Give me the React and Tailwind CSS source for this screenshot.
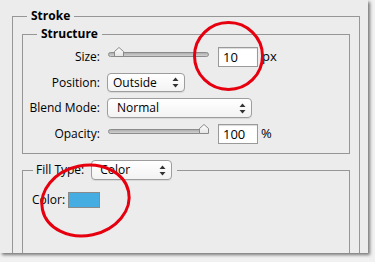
const LINE = 'border-[#969696]'

function Arrows() {
  return (
    <svg width="7" height="11" viewBox="0 0 7 11" className="shrink-0">
      <path d="M3.5 0.5 L6.5 4 L0.5 4 Z" fill="#333" />
      <path d="M3.5 10.5 L6.5 7 L0.5 7 Z" fill="#333" />
    </svg>
  )
}

function Select({ value, className, textPad }) {
  return (
    <div className={`flex items-center justify-between bg-gradient-to-b from-white to-[#f3f3f3] border border-[#9d9d9d] rounded-[4px] shadow-[0_1px_0_rgba(0,0,0,0.08)] pr-[5px] ${textPad} ${className}`}>
      <span className="leading-none">{value}</span>
      <Arrows />
    </div>
  )
}

function Slider({ pos }) {
  return (
    <svg width="101" height="20" viewBox="0 0 101 20" className="shrink-0">
      <defs>
        <linearGradient id="trk" x1="0" y1="0" x2="0" y2="1">
          <stop offset="0" stopColor="#a9a9a9" />
          <stop offset="1" stopColor="#d6d6d6" />
        </linearGradient>
        <linearGradient id="thm" x1="0" y1="0" x2="0" y2="1">
          <stop offset="0" stopColor="#ffffff" />
          <stop offset="1" stopColor="#e4e4e4" />
        </linearGradient>
      </defs>
      <rect x="0.5" y="5.5" width="100" height="4" rx="2" fill="url(#trk)" stroke="#8c8c8c" />
      <path d={`M${pos} 0.5 L${pos + 4.5} 4.5 L${pos + 4.5} 9.5 L${pos - 4.5} 9.5 L${pos - 4.5} 4.5 Z`} fill="url(#thm)" stroke="#8a8a8a" />
    </svg>
  )
}

function NumBox({ value }) {
  return (
    <div className="w-[40px] h-[20px] bg-white border border-[#9a9a9a] shadow-[inset_0_1px_1px_rgba(0,0,0,0.15)] flex items-center pl-[4px] text-[13px] leading-none">
      {value}
    </div>
  )
}

export default function App() {
  return (
    <div className="min-h-screen bg-[#f1f1f1] font-['Open_Sans',sans-serif] text-[12px] text-black">
      <div className="relative w-[368px] h-[253px] bg-[#ececec] shadow-[2px_2px_3px_rgba(0,0,0,0.5)] overflow-hidden">
        <div className="pt-2 pl-3 pr-2">
          <fieldset className={`border border-b-0 ${LINE} h-[245px]`}>
            <legend className="ml-[14px] px-1 font-bold leading-4">Stroke</legend>

            <fieldset className={`mt-[2px] mx-[9px] border ${LINE} pt-[5px] pb-[9px]`}>
              <legend className="ml-[14px] px-1 font-bold leading-4">Structure</legend>
              <div className="flex flex-col gap-[6px]">
                <div className="flex items-center h-[20px]">
                  <span className="w-[77px] text-right">Size:</span>
                  <div className="ml-[8px]"><Slider pos={11} /></div>
                  <div className="ml-[9px]"><NumBox value="10" /></div>
                  <span className="ml-[4px] text-[13px]">px</span>
                </div>
                <div className="flex items-center h-[19px]">
                  <span className="w-[77px] text-right">Position:</span>
                  <Select value="Outside" className="ml-[7px] w-[78px] h-[19px]" textPad="pl-[5px]" />
                </div>
                <div className="flex items-center h-[20px]">
                  <span className="w-[77px] text-right">Blend Mode:</span>
                  <Select value="Normal" className="ml-[7px] w-[145px] h-[20px]" textPad="pl-[9px]" />
                </div>
                <div className="flex items-center h-[20px]">
                  <span className="w-[77px] text-right">Opacity:</span>
                  <div className="ml-[8px]"><Slider pos={96} /></div>
                  <div className="ml-[9px]"><NumBox value="100" /></div>
                  <span className="ml-[3px] text-[13px]">%</span>
                </div>
              </div>
            </fieldset>

            <fieldset className={`mt-[6px] mx-[9px] border border-b-0 ${LINE} h-[94px] pt-[12px]`}>
              <legend className="ml-[10px] pl-[3px] pr-[5px]">
                <div className="flex items-center gap-[7px]">
                  <span>Fill Type:</span>
                  <Select value="Color" className="w-[81px] h-[20px]" textPad="pl-[8px]" />
                </div>
              </legend>
              <div className="flex items-center h-[16px] pl-[9px]">
                <span>Color:</span>
                <div className="ml-[3px] w-[32px] h-[16px] bg-[#45ade2] border border-[#8a8a8a]" />
              </div>
            </fieldset>
          </fieldset>
        </div>

        <svg className="absolute inset-0 pointer-events-none" width="368" height="253" viewBox="0 0 368 253">
          <ellipse cx="228.5" cy="56" rx="34" ry="33.5" fill="none" stroke="#e6000f" strokeWidth="3" />
          <ellipse cx="85.5" cy="200.5" rx="44" ry="35" fill="none" stroke="#e6000f" strokeWidth="3" transform="rotate(-12 85.5 200.5)" />
        </svg>
      </div>
    </div>
  )
}
